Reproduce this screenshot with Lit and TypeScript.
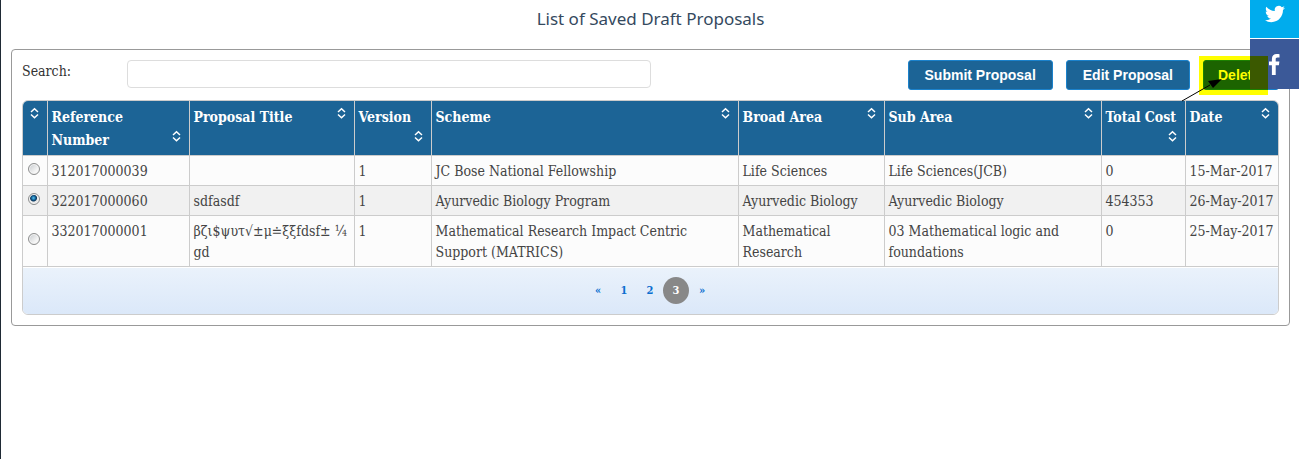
import { LitElement, html, css, svg } from "lit";
import { customElement, state } from "lit/decorators.js";

interface Proposal {
  ref: string;
  title: string;
  version: string;
  scheme: string;
  broad: string;
  sub: string;
  cost: string;
  date: string;
}

const PROPOSALS: Proposal[] = [
  { ref: "312017000039", title: "", version: "1", scheme: "JC Bose National Fellowship", broad: "Life Sciences", sub: "Life Sciences(JCB)", cost: "0", date: "15-Mar-2017" },
  { ref: "322017000060", title: "sdfasdf", version: "1", scheme: "Ayurvedic Biology Program", broad: "Ayurvedic Biology", sub: "Ayurvedic Biology", cost: "454353", date: "26-May-2017" },
  { ref: "332017000001", title: "βζι$ψυτ√±μ≐ξξfdsf± ¼ gd", version: "1", scheme: "Mathematical Research Impact Centric Support (MATRICS)", broad: "Mathematical Research", sub: "03 Mathematical logic and foundations", cost: "0", date: "25-May-2017" },
];

const HEADINGS = ["", "Reference Number", "Proposal Title", "Version", "Scheme", "Broad Area", "Sub Area", "Total Cost", "Date"];

const sortIcon = html`<svg class="sort" viewBox="0 0 16 16" aria-hidden="true">
  ${svg`<path d="M4 7 7.500 3.700 11 7M4 9.500 7.500 12.800 11 9.500" fill="none" stroke="#fff" stroke-width="1.500" />`}
</svg>`;

@customElement("app-root")
export class AppRoot extends LitElement {
  @state() private selected = "322017000060";

  static styles = css`
    :host {
      display: block;
      box-sizing: border-box;
      min-height: 100vh;
      padding: 0 9px 0 10px;
      border-left: 1px solid #1f2a35;
      background: #fff;
      color: #444;
      font: 14px/21px "Roboto Slab", "DejaVu Serif Condensed", "DejaVu Serif", serif;
    }
    * { box-sizing: border-box; }
    h1 {
      margin: 0;
      padding: 7px 0 18px;
      text-align: center;
      color: #34495e;
      font: 400 17px/24px "Noto Sans", sans-serif;
    }
    .panel {
      border: 1px solid #999;
      border-radius: 4px;
      padding: 10px;
    }
    .toolbar {
      display: grid;
      grid-template-columns: 1fr 5fr 6fr;
      margin-bottom: 10px;
    }
    .toolbar label { padding-top: 1px; color: #333; }
    .search {
      width: 100%;
      height: 28px;
      padding: 4px 8px;
      border: 1px solid #ddd;
      border-radius: 4px;
      background: #fff;
      font: inherit;
    }
    .actions {
      display: flex;
      justify-content: flex-end;
      gap: 13px;
    }
    .btn {
      height: 30px;
      padding: 0 16px;
      border: 1px solid #1b82cc;
      border-radius: 3px;
      background: #1c6496;
      color: #fff;
      font: bold 14px/20px "Liberation Sans", Arial, sans-serif;
      white-space: nowrap;
    }
    .marked { position: relative; }
    .marked .btn { min-width: 76px; padding: 0 14px; text-align: left; }
    .marker {
      position: absolute;
      z-index: 20;
      left: -4px;
      top: -4px;
      width: 69px;
      height: 39px;
      background: #ff0;
      mix-blend-mode: multiply;
      pointer-events: none;
    }
    .arrow {
      position: absolute;
      z-index: 21;
      left: -23px;
      top: 16px;
      width: 44px;
      height: 26px;
      pointer-events: none;
    }
    .grid {
      border: 1px solid #ccc;
      border-radius: 6px;
      overflow: hidden;
    }
    table {
      width: 100%;
      table-layout: fixed;
      border-collapse: collapse;
    }
    .c-pick { width: 24px; }
    .c-ref { width: 142px; }
    .c-title { width: 165px; }
    .c-version { width: 77px; }
    .c-broad { width: 146px; }
    .c-sub { width: 217px; }
    .c-cost { width: 84px; }
    .c-date { width: 93px; }
    th, td {
      padding: 5px 4px 3px;
      border: 1px solid #ccc;
      text-align: left;
      vertical-align: top;
    }
    th {
      background: #1c6496;
      color: #fff;
      font-size: 14px;
      line-height: 23px;
    }
    thead tr:first-child th { border-top: 0; }
    tr > :first-child { border-left: 0; }
    tr > :last-child { border-right: 0; white-space: nowrap; }
    td { background: #fcfcfc; }
    .chosen td { background: #f1f1f1; }
    td.pick {
      padding: 0 2px 4px 0;
      vertical-align: middle;
    }
    .sort {
      float: right;
      width: 16px;
      height: 16px;
      margin-top: -1px;
    }
    .radio {
      appearance: none;
      display: block;
      width: 12px;
      height: 12px;
      margin: 0 auto;
      border: 1px solid #8e8f8f;
      border-radius: 50%;
      background: linear-gradient(135deg, #c4c8cc, #f6f6f6 70%);
      box-shadow: inset 0 0 0 1px #f4f4f4;
    }
    .radio:checked {
      background: radial-gradient(circle at 45% 40%, #5cc6ee 0, #12639c 2px, #0b3659 3px, #e8e8e8 4px);
    }
    .pager {
      display: flex;
      justify-content: center;
      padding: 9px 1px 10px 0;
      border-top: 1px solid #fff;
      background: linear-gradient(#eaf2fb, #dbe8f9);
    }
    .page {
      width: 26px;
      height: 27px;
      border-radius: 50%;
      color: #0b6fd0;
      font-size: 11px;
      font-weight: bold;
      line-height: 27px;
      text-align: center;
      text-decoration: none;
    }
    .current { background: #888; color: #fff; }
    .social {
      position: fixed;
      z-index: 10;
      top: 0;
      right: 0;
      display: grid;
      gap: 1px;
      width: 49px;
      background: #fff;
    }
    .social a { display: grid; justify-content: center; }
    .twitter { height: 38px; padding-top: 4px; background: #00aced; }
    .facebook { height: 50px; align-content: center; background: #3b5998; }
    .social svg { display: block; }
  `;

  private row(p: Proposal) {
    const on = p.ref === this.selected;
    return html`<tr class=${on ? "chosen" : ""}>
      <td class="pick"><input class="radio" type="radio" name="proposal" aria-label=${p.ref}
        .checked=${on} @change=${() => (this.selected = p.ref)}></td>
      <td>${p.ref}</td><td>${p.title}</td><td>${p.version}</td><td>${p.scheme}</td>
      <td>${p.broad}</td><td>${p.sub}</td><td>${p.cost}</td><td>${p.date}</td>
    </tr>`;
  }

  render() {
    return html`
      <h1>List of Saved Draft Proposals</h1>
      <main class="panel">
        <div class="toolbar">
          <label for="search">Search:</label>
          <input class="search" id="search" type="text">
          <div class="actions">
            <button class="btn">Submit Proposal</button>
            <button class="btn">Edit Proposal</button>
            <div class="marked">
              <button class="btn">Delete</button>
              <div class="marker"></div>
              <svg class="arrow" viewBox="0 0 44 26" aria-hidden="true">
                <path d="M2 25 30 9" stroke="#000" stroke-width="1" />
                <path d="M42 3 28 5 33 12Z" fill="#000" />
              </svg>
            </div>
          </div>
        </div>
        <div class="grid">
          <table>
            <colgroup>
              <col class="c-pick"><col class="c-ref"><col class="c-title"><col class="c-version"><col>
              <col class="c-broad"><col class="c-sub"><col class="c-cost"><col class="c-date">
            </colgroup>
            <thead><tr>${HEADINGS.map((h) => html`<th scope="col">${h}${sortIcon}</th>`)}</tr></thead>
            <tbody>${PROPOSALS.map((p) => this.row(p))}</tbody>
          </table>
          <nav class="pager" aria-label="Pages">
            <a class="page" href="#prev">«</a>
            <a class="page" href="#1">1</a>
            <a class="page" href="#2">2</a>
            <a class="page current" href="#3" aria-current="page">3</a>
            <a class="page" href="#next">»</a>
          </nav>
        </div>
      </main>
      <aside class="social">
        <a class="twitter" href="#twitter" aria-label="Twitter">
          <svg width="20" height="20" viewBox="0 0 24 24"><path fill="#fff" d="M23.950 4.570a10 10 0 0 1-2.820.770 4.960 4.960 0 0 0 2.160-2.720c-.950.550-2 .950-3.130 1.180a4.920 4.920 0 0 0-8.380 4.480C7.690 8.090 4.070 6.130 1.640 3.160a4.820 4.820 0 0 0-.670 2.480c0 1.710.870 3.210 2.190 4.100a4.900 4.900 0 0 1-2.230-.620v.060a4.920 4.920 0 0 0 3.950 4.830 5 5 0 0 1-2.210.080 4.940 4.940 0 0 0 4.600 3.420A9.870 9.870 0 0 1 0 19.540a14 14 0 0 0 7.550 2.210c9.050 0 14-7.500 14-13.980 0-.210 0-.420-.020-.630a9.940 9.940 0 0 0 2.460-2.550z"/></svg>
        </a>
        <a class="facebook" href="#facebook" aria-label="Facebook">
          <svg width="11" height="21" viewBox="0 0 11 21"><path fill="#fff" d="M10.500.2v3.300h-2C7 3.500 6.700 4.200 6.700 5.300v2.300h3.700l-.5 3.700H6.700V21H2.900v-9.700H0V7.600h2.900V4.900C2.900 1.700 4.800 0 7.700 0c1.300 0 2.500.1 2.800.2z"/></svg>
        </a>
      </aside>
    `;
  }
}
